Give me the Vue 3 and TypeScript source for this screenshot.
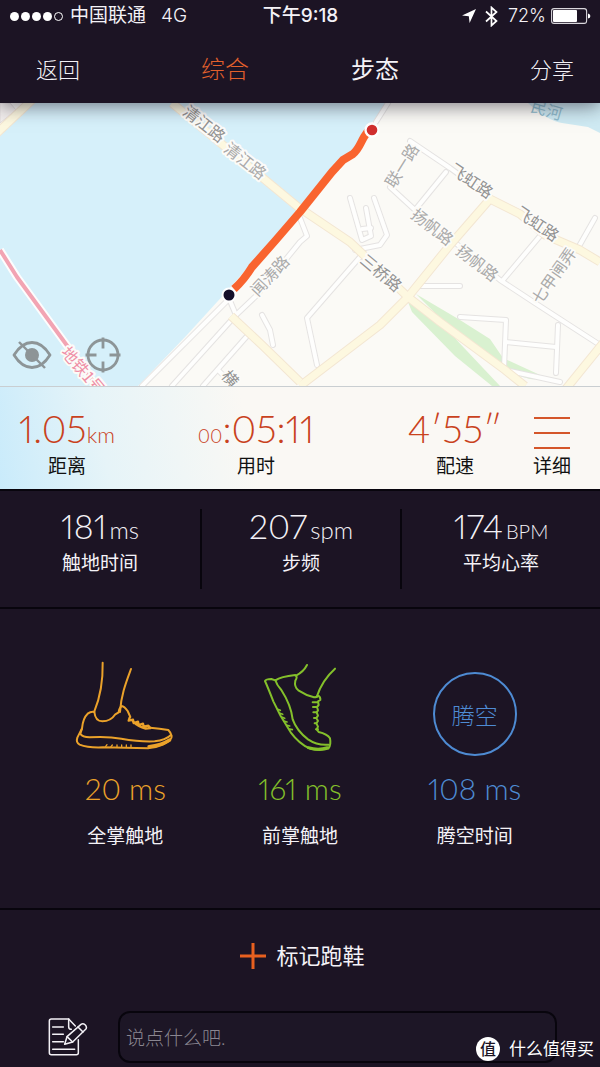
<script setup lang="ts">
import { ref } from 'vue'

interface Reading {
  value: string
  unit: string
  label: string
}

interface MapLabel {
  text: string
  x: number
  y: number
  angle: number
  kind: 'major' | 'minor' | 'metro' | 'water'
}

const readings: Reading[] = [
  { value: '181', unit: 'ms', label: '触地时间' },
  { value: '207', unit: 'spm', label: '步频' },
  { value: '174', unit: 'BPM', label: '平均心率' },
]

const mapLabels: MapLabel[] = [
  { text: '清江路', x: 205, y: 123, angle: 38, kind: 'major' },
  { text: '清江路', x: 246, y: 160, angle: 38, kind: 'minor' },
  { text: '闻涛路', x: 269, y: 275, angle: -47, kind: 'minor' },
  { text: '联一路', x: 401, y: 165, angle: -58, kind: 'minor' },
  { text: '飞虹路', x: 472, y: 180, angle: 34, kind: 'major' },
  { text: '飞虹路', x: 538, y: 223, angle: 34, kind: 'major' },
  { text: '扬帆路', x: 433, y: 226, angle: 38, kind: 'minor' },
  { text: '扬帆路', x: 478, y: 262, angle: 38, kind: 'minor' },
  { text: '三桥路', x: 382, y: 272, angle: 40, kind: 'major' },
  { text: '七甲闸弄', x: 553, y: 275, angle: -55, kind: 'minor' },
  { text: '地铁1号', x: 84, y: 370, angle: 50, kind: 'metro' },
  { text: '横', x: 231, y: 378, angle: 50, kind: 'major' },
  { text: '民河', x: 547, y: 109, angle: 16, kind: 'water' },
]

const lanes: string[] = [
  'M410 141L450 168L490 197',
  'M446 172L415 210L390 187',
  'M415 210L458 245L500 280L535 303L600 345',
  'M350 198L362 240L371 236L366 208',
  'M374 198L387 235L380 245L355 250',
  'M362 229L371 228',
  'M540 236L503 280',
  'M595 218L578 248',
  'M420 286L460 286',
  'M360 257L307 318L317 365',
  'M460 317L506 320L504 368',
  'M506 342L556 347',
  'M558 325L556 373',
  'M388 103L376 122',
  'M228 296L236 315L172 386',
  'M236 315L256 296L300 242L307 236L300 218',
  'M230 298L188 340L142 386',
  'M248 335L203 386',
  'M218 370L232 384',
  'M262 315L270 330L273 345',
  'M505 370L560 382',
]

const avenues: string[] = [
  'M172 103L298 207L350 242L408 297L440 322L505 370L525 386',
  'M300 386L380 325L408 297L450 245L490 199L520 214L545 235L580 250L600 262',
  'M231 316L262 345L300 382',
  'M604 342L565 390',
  'M-4 134L32 100',
]

const activeTab = ref('综合')
const routeVisible = ref(true)
const comment = ref('')
</script>

<template>
  <main class="screen">
    <header class="top">
      <div class="status">
        <div class="carrier">
          <span class="dots">
            <i v-for="n in 5" :key="n" class="dot" :class="{ hollow: n === 5 }"></i>
          </span>
          <span>中国联通</span>
          <span class="network">4G</span>
        </div>
        <time class="clock">下午9:18</time>
        <div class="power">
          <svg width="14" height="14" viewBox="0 0 14 14" aria-hidden="true">
            <path d="M14 0L0 6.6L6.8 7.2L7.6 14Z" fill="#fff" />
          </svg>
          <svg class="bluetooth" width="13" height="21" viewBox="0 0 13 21" aria-hidden="true">
            <path d="M1 5.5L11.5 15L6.5 19.5V1.5L11.5 6L1 15.5" fill="none" stroke="#fff" stroke-width="1.7" />
          </svg>
          <span class="percent">72%</span>
          <svg width="40" height="16" viewBox="0 0 40 16" aria-hidden="true">
            <rect x="0.6" y="0.6" width="35" height="14.8" rx="2.5" fill="none" stroke="#d9d7dc" stroke-width="1.1" />
            <rect x="2" y="2" width="24" height="12" rx="1" fill="#fff" />
            <path d="M37 5.4Q39.4 6 39.4 8T37 10.6Z" fill="#fff" />
          </svg>
        </div>
      </div>
      <nav class="nav">
        <button type="button" class="nav-side">返回</button>
        <div class="tabs">
          <button
            v-for="tab in ['综合', '步态']"
            :key="tab"
            type="button"
            class="tab"
            :class="{ active: tab === activeTab }"
            @click="activeTab = tab"
          >{{ tab }}</button>
        </div>
        <button type="button" class="nav-side right">分享</button>
      </nav>
    </header>

    <section class="map">
      <svg class="map-art" viewBox="0 103 600 283" preserveAspectRatio="xMidYMid slice" role="img" aria-label="跑步路线">
        <rect y="103" width="600" height="283" fill="#fbfaf6" />
        <path d="M32 103H386L350 154L300 208L228 290L186 336L138 386H0V136Z" fill="#d6f0fa" />
        <path d="M0 103H10L16 110L0 123Z" fill="#f3efee" stroke="#e2dcdc" />
        <path d="M528 103Q548 121 562 123L588 127L600 133V103Z" fill="#cfeaf3" />
        <path d="M416 294L460 320L490 339L503 358L540 375Q540 380 530 379L505 372L450 328Z" fill="#d9f1d0" />
        <path d="M408 302L450 333L500 386H492L455 356L412 312Z" fill="#d9f1d0" />
        <g fill="none" stroke-linejoin="round">
          <path v-for="d in lanes" :key="'c' + d" :d="d" stroke="#e5e3e2" stroke-width="6" stroke-linecap="round" />
          <path v-for="d in lanes" :key="d" :d="d" stroke="#fefefd" stroke-width="4" stroke-linecap="round" />
          <path v-for="d in avenues" :key="'c' + d" :d="d" stroke="#f3e6d2" stroke-width="9" />
          <path v-for="d in avenues" :key="d" :d="d" stroke="#fdf8e0" stroke-width="7" />
          <path d="M0 250L17 277L98 388" stroke="#fdfdfd" stroke-width="8" />
          <path d="M0 250L17 277L98 388" stroke="#f2a4b3" stroke-width="4" />
        </g>
        <text
          v-for="(l, i) in mapLabels"
          :key="i"
          :x="l.x"
          :y="l.y"
          :transform="`rotate(${l.angle} ${l.x} ${l.y})`"
          class="map-label"
          :class="l.kind"
        >{{ l.text }}</text>
        <g v-if="routeVisible">
          <path
            d="M368 131L364 137C360 144 359 149 353 154L343 160L332 172L300 212L275 241L252 267Q244 280 234 289"
            fill="none" stroke="#f9642f" stroke-width="8" stroke-linejoin="round"
          />
          <circle cx="372" cy="130" r="6.5" fill="#d1302f" stroke="#fff" stroke-width="2.4" />
          <circle cx="229" cy="295" r="6.5" fill="#15102a" stroke="#fff" stroke-width="2" />
        </g>
      </svg>
      <div class="map-tools">
        <button type="button" class="tool" aria-label="隐藏路线" @click="routeVisible = !routeVisible">
          <svg width="40" height="36" viewBox="0 0 40 36" fill="none" stroke="#8d9597" stroke-width="2.8">
            <path d="M2 18C7 10 13 5.500 20 5.500S33 10 38 18C33 26 27 30.500 20 30.500S7 26 2 18Z" stroke-linejoin="round" />
            <circle cx="20" cy="18" r="5.600" fill="#8d9597" />
            <path d="M7 5L33 31" stroke-width="2.400" />
          </svg>
        </button>
        <button type="button" class="tool" aria-label="定位">
          <svg width="36" height="36" viewBox="0 0 36 36" fill="none" stroke="#8d9597" stroke-width="2.8">
            <circle cx="18" cy="18" r="15" />
            <path d="M18 0.500V11.500M18 24.500V35.500M0.500 18H11.500M24.500 18H35.500" />
          </svg>
        </button>
      </div>
    </section>

    <section class="summary">
      <div class="cell">
        <p class="figure">1.05<span class="unit">km</span></p>
        <p class="label">距离</p>
      </div>
      <div class="cell">
        <p class="figure"><span class="hours">00</span>:05:11</p>
        <p class="label">用时</p>
      </div>
      <div class="cell">
        <p class="figure">4′55″</p>
        <p class="label">配速</p>
      </div>
      <button type="button" class="cell detail">
        <span class="bars"><i></i><i></i><i></i></span>
        <span class="label">详细</span>
      </button>
    </section>

    <section class="readings">
      <div v-for="r in readings" :key="r.label" class="reading">
        <p class="value">{{ r.value }}<span class="unit" :class="{ caps: r.unit === 'BPM' }">{{ r.unit }}</span></p>
        <p class="caption">{{ r.label }}</p>
      </div>
    </section>

    <section class="phases">
      <div class="phase amber">
        <svg class="shoe" viewBox="-14 0 420 315" aria-hidden="true">
          <g fill="none" stroke="currentColor" stroke-width="6" stroke-linejoin="round" stroke-linecap="round">
            <path d="M129 38C130 90 120 145 104 184" />
            <path d="M214 57C200 95 184 135 181 186" />
            <path d="M104 186Q94 184 84 191Q70 204 67 235L53 263Q48 278 60 284Q85 294 130 292L265 295Q290 293 310 284Q338 270 336 258Q333 247 326 240Q300 236 272 233" />
            <path d="M104 186C106 204 114 214 128 214C146 214 158 207 167 193L177 187Q178 174 186 168Q194 169 204 183L212 201" />
            <path d="M210 203L207 212L220 209L222 219L235 215L237 225L250 221L252 230L266 227L272 234L258 236Q236 230 220 215" stroke-width="7" />
            <path d="M67 236L62 251Q68 261 90 262Q145 259 185 266Q240 276 285 274Q318 270 334 255" />
            <path d="M138 289L142 284M154 290L158 285M172 290V285M186 290V285M200 290V285M214 290V285" stroke-width="4" />
            <path d="M268 290Q305 286 330 270" stroke-width="10" />
          </g>
        </svg>
        <p class="phase-value">20 ms</p>
        <p class="caption">全掌触地</p>
      </div>
      <div class="phase lime">
        <svg class="shoe" viewBox="-30 0 420 315" aria-hidden="true">
          <g fill="none" stroke="currentColor" stroke-width="6" stroke-linejoin="round" stroke-linecap="round">
            <path d="M201 45Q191 65 168 77" />
            <path d="M285 56C258 80 240 110 230 141" />
            <path d="M75 93Q78 87 94 87L106 91Q122 80 166 75Q174 80 166 92Q162 110 175 121Q198 136 222 142Q232 142 234 137Q242 140 241 150L234 154L236 165L231 171L234 181L230 187L234 197L229 204L234 213L229 220L234 230L230 238L236 246Q262 252 270 265Q274 284 265 296Q242 304 210 296Q178 282 152 247L122 198L100 154Q86 118 75 93Z" />
            <path d="M106 91Q110 105 124 120Q153 165 158 208Q170 242 204 268Q232 287 266 284" />
            <path d="M218 157H234M219 171H231M220 187H230M222 204H229M224 220H229M228 238H234" stroke-width="6" />
            <path d="M113 178L121 181M120 190L128 193M127 202L134 205M134 214L141 216M141 226L149 228M149 237L157 239" stroke-width="5" />
            <path d="M205 293Q235 302 262 293" stroke-width="9" />
          </g>
        </svg>
        <p class="phase-value">161 ms</p>
        <p class="caption">前掌触地</p>
      </div>
      <div class="phase sky">
        <div class="ring-box"><span class="ring">腾空</span></div>
        <p class="phase-value">108 ms</p>
        <p class="caption">腾空时间</p>
      </div>
    </section>

    <footer class="bottom">
      <button type="button" class="add">
        <svg width="26" height="26" viewBox="0 0 26 26" aria-hidden="true">
          <path d="M13 0V26M0 13H26" stroke="#e8601f" stroke-width="3" />
        </svg>
        <span>标记跑鞋</span>
      </button>
      <form class="compose" @submit.prevent>
        <svg width="40" height="40" viewBox="0 0 120 120" fill="none" stroke="#f3f1f6" stroke-width="4.500" stroke-linejoin="round" stroke-linecap="round" aria-hidden="true">
          <path d="M82 27L62 6H10Q4 6 4 12V107Q4 113 10 113H85Q91 113 91 107V68" />
          <path d="M62 6V29Q62 37 70 37" />
          <path d="M14 30H46M14 52H46M14 74H46M14 97H80" />
          <path d="M50 82L57 59L99 22Q105 18 112 24Q118 31 113 37L74 75Z" />
          <path d="M57 59L74 75M90 30L105 45" />
        </svg>
        <input v-model="comment" class="field" type="text" aria-label="评论" placeholder="说点什么吧." />
      </form>
    </footer>

    <div class="mark"><span class="seal">值</span><span>什么值得买</span></div>
  </main>
</template>

<style>
body {
  margin: 0;
  background: #1c1424;
}
</style>

<style scoped>
.screen {
  position: relative;
  min-height: 100vh;
  background: #1c1424;
  color: #f4f2f7;
  font-family: Lato, "Noto Sans CJK SC", sans-serif;
  font-weight: 300;
  font-variant-numeric: proportional-nums;
}
button {
  margin: 0;
  padding: 0;
  border: 0;
  background: none;
  color: inherit;
  font: inherit;
  cursor: pointer;
}
p {
  margin: 0;
}
svg {
  display: block;
}

.top {
  position: relative;
  z-index: 1;
  background: #1c1424;
  box-shadow: 0 3px 18px rgba(20, 16, 30, 0.55);
}
.status {
  display: grid;
  grid-template-columns: 1fr auto 1fr;
  align-items: center;
  height: 32px;
  padding: 0 9px 0 10px;
  font-family: Inter, "Noto Sans CJK SC", sans-serif;
  font-size: 19px;
  line-height: 32px;
}
.carrier,
.power,
.dots {
  display: flex;
  align-items: center;
}
.carrier {
  gap: 7px;
  font-weight: 400;
}
.dots {
  gap: 2px;
}
.dot {
  width: 9px;
  height: 9px;
  border-radius: 50%;
  background: #fff;
}
.dot.hollow {
  box-sizing: border-box;
  border: 1px solid #fff;
  background: none;
}
.network {
  margin-left: 8px;
  font-weight: 300;
}
.clock {
  font-weight: 500;
}
.power {
  justify-content: flex-end;
}
.bluetooth {
  margin: 0 10px 0 9px;
}
.percent {
  margin-right: 5px;
  font-size: 18px;
}
.nav {
  display: grid;
  grid-template-columns: 1fr auto 1fr;
  align-items: center;
  height: 71px;
  padding: 0 26px;
  font-family: "Noto Sans CJK SC", sans-serif;
  line-height: 32px;
}
.nav-side {
  justify-self: start;
  padding-left: 10px;
  font-size: 22px;
}
.nav-side.right {
  justify-self: end;
}
.tabs {
  display: flex;
  gap: 102px;
}
.tab {
  font-size: 24px;
  font-weight: 400;
}
.tab.active {
  color: #e2602c;
  font-weight: 300;
}

.map {
  position: relative;
  height: 283px;
  background: #fbfaf6;
}
.map-art {
  width: 100%;
  height: 100%;
}
.map-label {
  text-anchor: middle;
  dominant-baseline: central;
  paint-order: stroke;
  stroke: #fcfbf8;
  stroke-width: 4px;
  stroke-linejoin: round;
  font-family: "Noto Sans CJK SC", sans-serif;
  font-size: 16px;
  font-weight: 400;
}
.map-label.major {
  fill: #929292;
}
.map-label.minor {
  fill: #aaaaaa;
}
.map-label.metro {
  fill: #ef8fa6;
}
.map-label.water {
  fill: #8fbccd;
  stroke: none;
}
.map-tools {
  position: absolute;
  left: 12px;
  bottom: 13px;
  display: flex;
  gap: 33px;
}

.summary {
  display: grid;
  grid-template-columns: 134fr 244fr 154fr 40fr;
  box-sizing: border-box;
  height: 103px;
  padding: 19px 28px 0 0;
  border-top: 1px solid #c9ced1;
  background: linear-gradient(78deg, #c9ebfb 0%, #e6f4f8 18%, #faf8f4 42%, #faf8f4 100%);
}
.cell {
  display: flex;
  flex-direction: column;
  align-items: center;
}
.figure {
  color: #c9421d;
  font-size: 38px;
  line-height: 44px;
  white-space: nowrap;
}
.figure .unit {
  font-size: 22px;
  line-height: 1;
}
.figure .hours {
  font-size: 19px;
  line-height: 1;
}
.label {
  margin-top: 2px;
  color: #111;
  font-size: 19px;
  font-weight: 400;
  line-height: 28px;
  white-space: nowrap;
}
.bars {
  display: flex;
  flex-direction: column;
  gap: 13px;
  box-sizing: border-box;
  width: 36px;
  height: 44px;
  padding-top: 11px;
}
.bars i {
  flex: none;
  height: 2px;
  background: #d4562a;
}

.readings {
  display: grid;
  grid-template-columns: repeat(3, 1fr);
  box-sizing: border-box;
  height: 120px;
  padding: 18px 0;
  border-top: 2px solid #08050d;
  border-bottom: 2px solid #08050d;
}
.reading {
  text-align: center;
}
.reading + .reading {
  border-left: 2px solid #08050d;
}
.value {
  margin-top: -3px;
  font-size: 34px;
  line-height: 40px;
}
.value .unit {
  margin-left: 3px;
  font-size: 24px;
  line-height: 1;
}
.value .unit.caps {
  font-size: 20px;
}
.caption {
  margin-top: 3px;
  color: #f4f2f7;
  font-size: 19px;
  font-weight: 400;
  line-height: 28px;
}

.phases {
  display: grid;
  grid-template-columns: repeat(3, 1fr);
  box-sizing: border-box;
  height: 301px;
  padding: 41px 38px 0;
  border-bottom: 2px solid #08050d;
}
.phase {
  display: flex;
  flex-direction: column;
  align-items: center;
}
.amber {
  color: #eba22a;
}
.lime {
  color: #84c02b;
}
.sky {
  color: #4e8bd3;
}
.shoe {
  width: 140px;
  height: 105px;
}
.ring-box {
  display: flex;
  align-items: center;
  box-sizing: border-box;
  height: 105px;
  padding-top: 22px;
}
.ring {
  box-sizing: border-box;
  width: 84px;
  height: 84px;
  border: 2px solid currentColor;
  border-radius: 50%;
  font-family: "Noto Sans CJK SC", sans-serif;
  font-size: 23px;
  line-height: 80px;
  text-align: center;
}
.phase-value {
  margin-top: 15px;
  font-size: 30px;
  line-height: 36px;
}
.phase .caption {
  margin-top: 16px;
}

.bottom {
  display: flex;
  flex-direction: column;
  padding: 30px 43px 4px 48px;
}
.add {
  display: flex;
  align-items: center;
  align-self: center;
  gap: 10px;
  font-size: 22px;
  font-weight: 400;
  line-height: 32px;
}
.compose {
  display: flex;
  align-items: center;
  gap: 30px;
  margin-top: 39px;
}
.compose svg {
  flex: none;
}
.field {
  flex: 1;
  box-sizing: border-box;
  min-width: 0;
  height: 52px;
  padding: 0 6px;
  border: 2px solid #08050d;
  border-radius: 12px;
  outline: 0;
  background: #1d1626;
  color: #f4f2f7;
  font: inherit;
  font-size: 19px;
}
.field::placeholder {
  color: #8a8691;
  opacity: 1;
}
.mark {
  position: absolute;
  right: 6px;
  bottom: 6px;
  display: flex;
  align-items: center;
  gap: 9px;
  color: #fff;
  font-size: 17px;
  font-weight: 400;
  line-height: 24px;
}
.seal {
  width: 24px;
  height: 24px;
  border-radius: 50%;
  background: #fff;
  color: #1c1424;
  font-size: 16px;
  font-weight: 500;
  text-align: center;
}
</style>
